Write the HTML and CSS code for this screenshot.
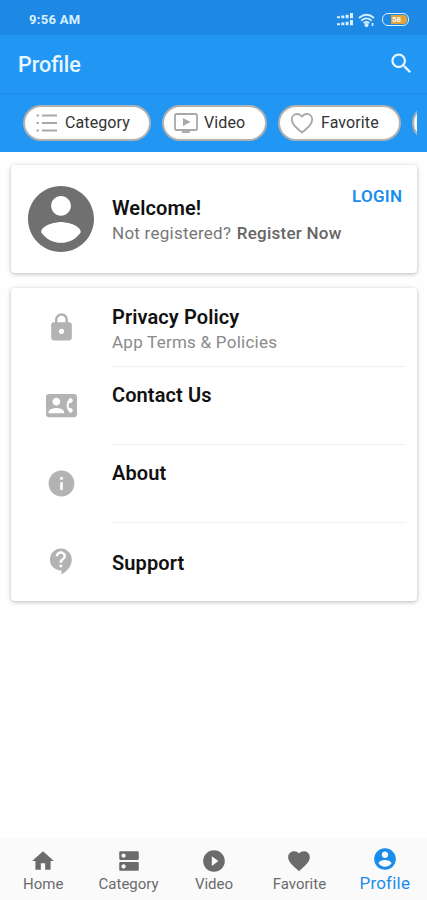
FILE: index.html
```
<!DOCTYPE html>
<html lang="en">

<head>
  <meta charset="UTF-8">
  <meta name="viewport" content="width=device-width, initial-scale=1.0">
  <title>Profile</title>
  <link rel="stylesheet" href="styles.css">
</head>

<body>

  <div class="status">
    <span class="status__time">9:56 AM</span>
    <div class="status__icons">
      <svg class="status__signal" viewBox="0 0 17 13" width="17" height="13">
        <path d="M0 3.2h3v2H0zM4.3 2.6h3v2.6h-3zM8.6 1.8h3v3.4h-3zM13 0h3v5.2h-3zM0 10.2h3v2H0zM4.3 9.6h3v2.6h-3zM8.6 8.8h3v3.4h-3zM13 7h3v5.2h-3z" />
      </svg>
      <svg class="status__wifi" viewBox="0 0 18 14" width="18" height="14">
        <path d="M1 5q7.5-6.5 15 0M3.3 7.6q5.2-4.4 10.4 0M5.6 10.1q2.9-2.4 5.8 0" />
        <circle cx="8.5" cy="12" r="1.2" />
        <path d="M14.5 10v3" />
      </svg>
      <div class="battery"><span class="battery__level">58</span></div>
    </div>
  </div>

  <header class="header">
    <h1 class="header__title">Profile</h1>
    <svg class="header__search" viewBox="0 0 24 24">
      <path d="M15.5 14h-.79l-.28-.27C15.41 12.59 16 11.11 16 9.5 16 5.91 13.09 3 9.5 3S3 5.91 3 9.5 5.91 16 9.5 16c1.61 0 3.09-.59 4.23-1.57l.27.28v.79l5 4.99L20.49 19l-4.99-5zm-6 0C7.01 14 5 11.99 5 9.5S7.01 5 9.5 5 14 7.01 14 9.5 11.99 14 9.5 14z" />
    </svg>
  </header>

  <div class="chips">
    <div class="chips__list">
      <a href="#" class="chip chip_category">
        <svg class="chip__icon" viewBox="0 0 24 24">
          <path d="M7 4.5h15M7 12h15M7 19.5h15M1.5 4.5h2.4M1.5 12h2.4M1.5 19.5h2.4" />
        </svg>
        <span>Category</span>
      </a>
      <a href="#" class="chip chip_video">
        <svg class="chip__icon" viewBox="0 0 24 24">
          <rect x="1" y="3" width="22" height="16" rx="1.6" />
          <path d="M8 21h8" />
          <path class="chip__play" d="M9 7l7.5 4L9 15z" />
        </svg>
        <span>Video</span>
      </a>
      <a href="#" class="chip chip_favorite">
        <svg class="chip__icon" viewBox="0 0 24 24">
          <path d="M12 21.5C6 16.4 1.8 13 1.8 8.4 1.8 5.3 4.1 3 7.1 3c1.9 0 3.7.9 4.9 2.5C13.2 3.9 15 3 16.9 3c3 0 5.3 2.3 5.3 5.4 0 4.6-4.2 8-10.2 13.1z" />
        </svg>
        <span>Favorite</span>
      </a>
      <a href="#" class="chip chip_next"></a>
    </div>
  </div>

  <main class="page">
    <section class="card user">
      <svg class="user__avatar" viewBox="2 2 20 20">
        <path d="M12 2C6.48 2 2 6.48 2 12s4.48 10 10 10 10-4.48 10-10S17.52 2 12 2zm0 3c1.66 0 3 1.34 3 3s-1.34 3-3 3-3-1.34-3-3 1.34-3 3-3zm0 14.2c-2.5 0-4.71-1.28-6-3.22.03-1.99 4-3.08 6-3.08 1.99 0 5.97 1.09 6 3.08-1.29 1.94-3.5 3.22-6 3.22z" />
      </svg>
      <div class="user__text">
        <h2 class="title">Welcome!</h2>
        <p class="subtitle">Not registered? <a href="#" class="user__register">Register Now</a></p>
      </div>
      <a href="#" class="user__login">LOGIN</a>
    </section>

    <ul class="card menu">
      <li class="menu__item">
        <svg class="menu__icon" viewBox="0 0 24 24">
          <path d="M18 8h-1V6c0-2.76-2.24-5-5-5S7 3.24 7 6v2H6c-1.1 0-2 .9-2 2v10c0 1.1.9 2 2 2h12c1.1 0 2-.9 2-2V10c0-1.1-.9-2-2-2zm-6 9c-1.1 0-2-.9-2-2s.9-2 2-2 2 .9 2 2-.9 2-2 2zm3.1-9H8.9V6c0-1.71 1.39-3.1 3.1-3.1 1.71 0 3.1 1.39 3.1 3.1v2z" />
        </svg>
        <div class="menu__body">
          <h2 class="title">Privacy Policy</h2>
          <p class="subtitle subtitle_light">App Terms &amp; Policies</p>
        </div>
      </li>
      <li class="menu__item">
        <svg class="menu__icon" viewBox="0 0 24 24">
          <path d="M22 3H2C.9 3 0 3.9 0 5v14c0 1.1.9 2 2 2h20c1.1 0 1.99-.9 1.99-2L24 5c0-1.1-.9-2-2-2zM8 6c1.66 0 3 1.34 3 3s-1.34 3-3 3-3-1.34-3-3 1.34-3 3-3zm6 12H2v-1c0-2 4-3.1 6-3.1s6 1.1 6 3.1v1zm3.85-4h1.64L21 16l-1.99 1.99c-1.31-.98-2.28-2.38-2.73-3.99-.18-.64-.28-1.31-.28-2s.1-1.36.28-2c.45-1.62 1.42-3.01 2.73-3.99L21 8l-1.51 2h-1.64c-.22.63-.35 1.3-.35 2s.13 1.37.35 2z" />
        </svg>
        <div class="menu__body">
          <h2 class="title">Contact Us</h2>
        </div>
      </li>
      <li class="menu__item">
        <svg class="menu__icon" viewBox="0 0 24 24">
          <path d="M12 2C6.48 2 2 6.48 2 12s4.48 10 10 10 10-4.48 10-10S17.52 2 12 2zm1 15h-2v-6h2v6zm0-8h-2V7h2v2z" />
        </svg>
        <div class="menu__body">
          <h2 class="title">About</h2>
        </div>
      </li>
      <li class="menu__item menu__item_last">
        <svg class="menu__icon" viewBox="0 0 24 24">
          <path d="M11.5 2C6.81 2 3 5.81 3 10.5S6.81 19 11.5 19h.5v3c4.86-2.34 8-7 8-11.5C20 5.81 16.19 2 11.5 2zm1 14.5h-2v-2h2v2zm0-3.5h-2c0-3.25 3-3 3-5 0-1.1-.9-2-2-2s-2 .9-2 2h-2c0-2.21 1.79-4 4-4s4 1.79 4 4c0 2.5-3 2.75-3 5z" />
        </svg>
        <div class="menu__body">
          <h2 class="title">Support</h2>
        </div>
      </li>
    </ul>
  </main>

  <nav class="tabs">
    <a href="#" class="tabs__link">
      <svg class="tabs__icon" viewBox="0 0 24 24">
        <path d="M10 20v-6h4v6h5v-8h3L12 3 2 12h3v8z" />
      </svg>
      <span>Home</span>
    </a>
    <a href="#" class="tabs__link">
      <svg class="tabs__icon" viewBox="0 0 24 24">
        <path d="M20 13H4c-.55 0-1 .45-1 1v6c0 .55.45 1 1 1h16c.55 0 1-.45 1-1v-6c0-.55-.45-1-1-1zM7 19c-1.1 0-2-.9-2-2s.9-2 2-2 2 .9 2 2-.9 2-2 2zM20 3H4c-.55 0-1 .45-1 1v6c0 .55.45 1 1 1h16c.55 0 1-.45 1-1V4c0-.55-.45-1-1-1zM7 9c-1.1 0-2-.9-2-2s.9-2 2-2 2 .9 2 2-.9 2-2 2z" />
      </svg>
      <span>Category</span>
    </a>
    <a href="#" class="tabs__link">
      <svg class="tabs__icon" viewBox="0 0 24 24">
        <path d="M12 2C6.48 2 2 6.48 2 12s4.48 10 10 10 10-4.48 10-10S17.52 2 12 2zm-2 14.5v-9l6 4.5-6 4.5z" />
      </svg>
      <span>Video</span>
    </a>
    <a href="#" class="tabs__link">
      <svg class="tabs__icon" viewBox="0 0 24 24">
        <path d="M12 21.35l-1.45-1.32C5.4 15.36 2 12.28 2 8.5 2 5.42 4.42 3 7.5 3c1.74 0 3.41.81 4.5 2.09C13.09 3.81 14.76 3 16.5 3 19.58 3 22 5.42 22 8.5c0 3.78-3.4 6.86-8.55 11.54L12 21.35z" />
      </svg>
      <span>Favorite</span>
    </a>
    <a href="#" class="tabs__link tabs__link_active">
      <svg class="tabs__icon" viewBox="0 0 24 24">
        <path d="M12 2C6.48 2 2 6.48 2 12s4.48 10 10 10 10-4.48 10-10S17.52 2 12 2zm0 3c1.66 0 3 1.34 3 3s-1.34 3-3 3-3-1.34-3-3 1.34-3 3-3zm0 14.2c-2.5 0-4.71-1.28-6-3.22.03-1.99 4-3.08 6-3.08 1.99 0 5.97 1.09 6 3.08-1.29 1.94-3.5 3.22-6 3.22z" />
      </svg>
      <span>Profile</span>
    </a>
  </nav>

</body>
</html>
```

FILE: styles.css
```
* {
  box-sizing: border-box;
  margin: 0;
  padding: 0;
}

body {
  display: flex;
  flex-direction: column;
  height: 100vh;
  overflow: hidden;
  background-color: #fefefe;
  font-family: Roboto, "Liberation Sans", sans-serif;
}

a {
  color: inherit;
  text-decoration: none;
}

svg {
  display: block;
  flex: none;
  fill: currentColor;
}

/* status bar */
.status {
  display: flex;
  align-items: center;
  justify-content: space-between;
  height: 35px;
  padding: 4px 18px 0 29px;
  background-color: #1e88e5;
  color: #d9f1ff;
}

.status__time {
  font-size: 13px;
  font-weight: 700;
  letter-spacing: 0.3px;
}

.status__icons {
  display: flex;
  align-items: center;
  gap: 6px;
}

.status__signal {
  margin-right: -2px;
}

.status__wifi {
  fill: none;
  stroke: currentColor;
  stroke-width: 1.7;
}

.battery {
  display: flex;
  justify-content: flex-end;
  width: 27px;
  height: 13px;
  padding: 1px;
  border: 1.5px solid #d9f1ff;
  border-radius: 6px;
}

.battery__level {
  width: 16px;
  padding-left: 1px;
  border-radius: 0 4px 4px 0;
  background-color: #dfa43c;
  color: #fff;
  font-size: 8px;
  font-weight: 700;
  line-height: 9px;
}

/* top bar */
.header {
  display: flex;
  align-items: center;
  justify-content: space-between;
  height: 59px;
  padding: 0 12px 0 18px;
  background-color: #2196f3;
  color: #e6f7ff;
  border-bottom: 1px solid #1e8ce6;
}

.header__title {
  padding-top: 1px;
  font-size: 21.5px;
  font-weight: 500;
}

.header__search {
  width: 27px;
  height: 27px;
  margin-bottom: 1px;
}

.chips {
  height: 58px;
  padding: 11px 10px 0 23px;
  background-color: #2196f3;
}

.chips__list {
  display: flex;
  gap: 11px;
  overflow: hidden;
}

.chip {
  display: flex;
  flex: none;
  align-items: center;
  gap: 6px;
  height: 36px;
  padding: 0 0 2px 10px;
  border: 2px solid #b0b0b0;
  border-radius: 18px;
  background-color: #fff;
  color: #333;
  font-size: 16px;
  letter-spacing: 0.1px;
}

.chip_category {
  width: 128px;
}

.chip_video {
  width: 105px;
}

.chip_favorite {
  gap: 7px;
  width: 123px;
}

.chip_next {
  width: 110px;
}

.chip__icon {
  width: 24px;
  height: 24px;
  margin-top: 2px;
  fill: none;
  stroke: #a8a8a8;
  stroke-width: 1.8;
}

.chip__play {
  fill: #a8a8a8;
  stroke: none;
}

/* content */
.page {
  flex: 1;
  padding: 13px 10px 0 11px;
}

.card {
  border-radius: 4px;
  background-color: #fff;
  box-shadow: 0 1px 4px rgba(0, 0, 0, 0.28);
}

.title {
  color: #111;
  font-size: 20px;
  font-weight: 600;
  letter-spacing: 0.1px;
  line-height: 26px;
}

.subtitle {
  color: #777;
  font-size: 17px;
  letter-spacing: 0.25px;
  line-height: 24px;
}

.subtitle_light {
  color: #8a8a8a;
}

.user {
  display: flex;
  height: 108px;
  margin-bottom: 15px;
  padding: 21px 14px 0 17px;
}

.user__avatar {
  width: 66px;
  height: 66px;
  color: #707070;
}

.user__text {
  flex: 1;
  margin-left: 18px;
  padding-top: 9px;
  white-space: nowrap;
}

.user__register {
  margin-left: 1px;
  color: #666;
  font-weight: 500;
}

.user__login {
  width: 51px;
  margin-left: -51px;
  color: #1a8cec;
  font-size: 17px;
  font-weight: 600;
  letter-spacing: 0.3px;
  line-height: 20px;
}

.menu {
  height: 313px;
  padding-top: 1px;
  list-style: none;
}

.menu__item {
  display: flex;
  height: 78px;
}

.menu__icon {
  width: 31px;
  height: 31px;
  margin: 23px 35px 0;
  color: #b3b3b3;
}

.menu__body {
  flex: 1;
  margin-right: 11px;
  padding-top: 15px;
  border-bottom: 1px solid #f1f1f1;
}

.menu__item_last .menu__body {
  padding-top: 27px;
  border-bottom: none;
}

/* bottom navigation */
.tabs {
  display: grid;
  grid-template-columns: repeat(5, 1fr);
  height: 62px;
  background-color: #fafafa;
}

.tabs__link {
  display: flex;
  flex-direction: column;
  align-items: center;
  padding: 10px 0 0 1px;
  color: #6b6b6b;
  font-size: 15px;
  line-height: 20px;
}

.tabs__icon {
  width: 26px;
  height: 26px;
}

.tabs__link_active {
  padding-top: 8px;
  color: #1a8cec;
  font-size: 17px;
  letter-spacing: 0.2px;
  line-height: 22px;
}
```
